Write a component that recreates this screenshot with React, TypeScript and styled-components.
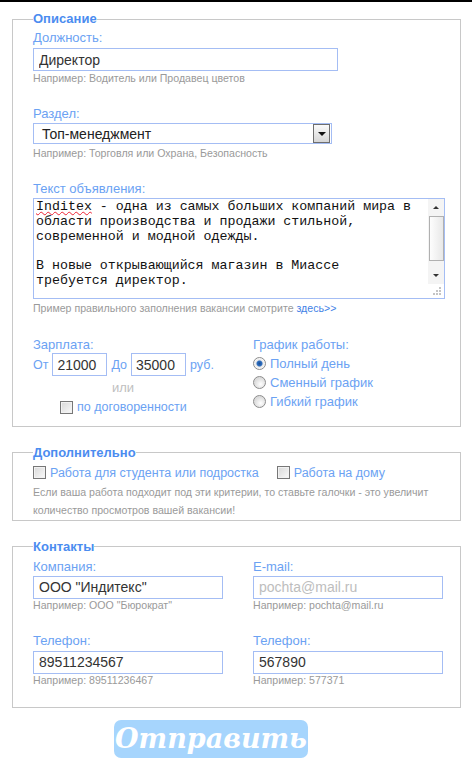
import React from 'react'
import styled, { createGlobalStyle } from 'styled-components'

const GlobalStyle = createGlobalStyle`
  html, body {
    margin: 0;
    padding: 0;
    background: #fff;
  }
  body {
    font-family: "Liberation Sans", Arial, sans-serif;
    border-top: 2px solid #000;
  }
`

const Page = styled.div`
  display: flex;
  flex-direction: column;
  width: 472px;
  padding-bottom: 10px;
`

const Box = styled.fieldset<{ $top: number; $bottom: number }>`
  margin: ${p => p.$top}px 11px 0 12px;
  padding: 0 18px ${p => p.$bottom}px 20px;
  border: 1px solid #c8c8c8;
  min-width: 0;
`

const Legend = styled.legend`
  padding: 0;
  font-size: 13px;
  line-height: 16px;
  font-weight: bold;
  color: #4b8cf0;
`

const Label = styled.div<{ $mt?: number }>`
  margin-top: ${p => p.$mt ?? 0}px;
  font-size: 13px;
  line-height: 16px;
  color: #6ba2f3;
`

const Hint = styled.div<{ $mt?: number }>`
  margin-top: ${p => p.$mt ?? 1}px;
  font-size: 10.6px;
  line-height: 12px;
  color: #9a9a9a;
  white-space: nowrap;
`

const Link = styled.span`
  color: #3f82e6;
`

const TextInput = styled.input<{ $w: number; $mt?: number }>`
  display: block;
  box-sizing: border-box;
  width: ${p => p.$w}px;
  height: 23px;
  margin: ${p => p.$mt ?? 2}px 0 0;
  padding: 0 5px;
  border: 1px solid #a4bdf4;
  outline: none;
  font-family: "Liberation Sans", Arial, sans-serif;
  font-size: 14px;
  color: #333;
  &::placeholder {
    color: #bdbdbd;
  }
`

const SmallInput = styled(TextInput)`
  display: inline-block;
  margin: 0;
  padding: 0 3px 0 4px;
`

const Select = styled.div`
  box-sizing: border-box;
  width: 299px;
  height: 21px;
  margin-top: 1px;
  border: 1px solid #a4bdf4;
  display: flex;
  align-items: center;
  justify-content: space-between;
  padding: 0 1px 0 8px;
  font-size: 14px;
  color: #222;
`

const SelectButton = styled.span`
  box-sizing: border-box;
  width: 17px;
  height: 19px;
  border: 1px solid #6e6e6e;
  background: linear-gradient(#fafafa, #d6d6d6);
  display: flex;
  align-items: center;
  justify-content: center;
  &::after {
    content: '';
    border-left: 4px solid transparent;
    border-right: 4px solid transparent;
    border-top: 4px solid #111;
  }
`

const TextArea = styled.div`
  box-sizing: border-box;
  width: 412px;
  height: 101px;
  margin-top: 1px;
  border: 1px solid #a4bdf4;
  display: flex;
`

const AreaText = styled.div`
  flex: 1;
  padding: 1px 2px;
  font-family: "Liberation Mono", "Courier New", monospace;
  font-size: 13.3px;
  line-height: 14.8px;
  color: #111;
  white-space: pre;
  overflow: hidden;
`

const Spell = styled.span`
  text-decoration: underline wavy #e23;
  text-decoration-thickness: 1px;
  text-underline-offset: 1px;
`

const Scrollbar = styled.div`
  width: 16px;
  display: flex;
  flex-direction: column;
  align-items: center;
  background: #f4f4f4;
  border-left: 1px solid #fff;
`

const Arrow = styled.span<{ $up?: boolean }>`
  height: 17px;
  display: flex;
  align-items: center;
  &::after {
    content: '';
    border-left: 3px solid transparent;
    border-right: 3px solid transparent;
    ${p => p.$up ? 'border-bottom: 3px solid #333;' : 'border-top: 3px solid #333;'}
  }
`

const Thumb = styled.span`
  box-sizing: border-box;
  width: 15px;
  height: 45px;
  border: 1px solid #b0b0b0;
  background: linear-gradient(90deg, #fdfdfd, #e8e8e8);
`

const Track = styled.span`
  flex: 1;
`

const Grip = styled.span`
  height: 14px;
  width: 16px;
  background: #fff;
  display: flex;
  align-items: flex-end;
  justify-content: flex-end;
  padding: 0 3px 3px 0;
  box-sizing: border-box;
`

const Corner = () => (
  <svg width="8" height="8" viewBox="0 0 8 8">
    <rect x="6" y="0" width="2" height="2" fill="#c4c4c4" />
    <rect x="3" y="3" width="2" height="2" fill="#c4c4c4" />
    <rect x="6" y="3" width="2" height="2" fill="#c4c4c4" />
    <rect x="0" y="6" width="2" height="2" fill="#c4c4c4" />
    <rect x="3" y="6" width="2" height="2" fill="#c4c4c4" />
    <rect x="6" y="6" width="2" height="2" fill="#c4c4c4" />
  </svg>
)

const Columns = styled.div<{ $mt: number }>`
  display: grid;
  grid-template-columns: 220px 1fr;
  margin-top: ${p => p.$mt}px;
`

const Col = styled.div``

const InputRow = styled.div`
  display: flex;
  align-items: center;
  gap: 4px;
  height: 23px;
  font-size: 12.5px;
  color: #6ba2f3;
`

const Or = styled.div`
  width: 180px;
  margin-top: 6px;
  text-align: center;
  font-size: 13px;
  line-height: 12px;
  color: #c0c0c0;
`

const CheckRow = styled.label<{ $ml?: number; $mt?: number }>`
  display: inline-flex;
  align-items: center;
  gap: 4px;
  margin-left: ${p => p.$ml ?? 0}px;
  margin-top: ${p => p.$mt ?? 0}px;
  height: 16px;
  font-size: 12.5px;
  color: #6ba2f3;
  white-space: nowrap;
`

const Check = styled.span`
  box-sizing: border-box;
  width: 13px;
  height: 13px;
  border: 1px solid #777;
  background: linear-gradient(135deg, #d8d8d8, #fafafa);
  box-shadow: inset 0 0 0 1px #f2f2f2;
`

const Radio = styled.span<{ $on?: boolean }>`
  box-sizing: border-box;
  width: 13px;
  height: 13px;
  border-radius: 50%;
  border: 1px solid #8c8c8c;
  background: ${p =>
    p.$on
      ? 'radial-gradient(circle, #1c4f96 0, #2f6fc0 2.5px, #e8e8e8 3.5px, #fff 6px)'
      : 'radial-gradient(circle at 60% 65%, #fff 0, #dcdcdc 6px)'};
`

const RadioList = styled.div`
  display: flex;
  flex-direction: column;
  margin-top: 1px;
`

const RadioRow = styled.label`
  display: flex;
  align-items: center;
  gap: 4px;
  height: 19px;
  font-size: 13px;
  color: #6ba2f3;
`

const Extras = styled.div`
  display: flex;
  margin-top: 4px;
`

const Note = styled.div`
  margin-top: 2px;
  font-size: 10.6px;
  line-height: 18.5px;
  color: #9a9a9a;
  white-space: nowrap;
`

const Submit = styled.button`
  align-self: flex-start;
  margin: 12px 0 0 114px;
  width: 194px;
  height: 38px;
  border: none;
  border-radius: 7px;
  background: #a6d5fd;
  color: #fff;
  font-family: "DejaVu Serif", "Liberation Serif", serif;
  font-style: italic;
  font-weight: bold;
  font-size: 27px;
  line-height: 36px;
  padding: 0;
`

export default function App() {
  return (
    <Page>
      <GlobalStyle />
      <Box $top={9} $bottom={8}>
        <Legend>Описание</Legend>
        <Label $mt={3}>Должность:</Label>
        <TextInput $w={305} defaultValue="Директор" />
        <Hint>Например: Водитель или Продавец цветов</Hint>

        <Label $mt={22}>Раздел:</Label>
        <Select>
          <span>Топ-менеджмент</span>
          <SelectButton />
        </Select>
        <Hint $mt={3}>Например: Торговля или Охрана, Безопасность</Hint>

        <Label $mt={22}>Текст объявления:</Label>
        <TextArea>
          <AreaText>
            <Spell>Inditex</Spell>{' - одна из самых больших компаний мира в\nобласти производства и продажи стильной,\nсовременной и модной одежды.\n\nВ новые открывающийся магазин в Миассе\nтребуется директор.'}
          </AreaText>
          <Scrollbar>
            <Arrow $up />
            <Thumb />
            <Track />
            <Arrow />
            <Grip><Corner /></Grip>
          </Scrollbar>
        </TextArea>
        <Hint $mt={3}>
          Пример правильного заполнения вакансии смотрите <Link>здесь&gt;&gt;</Link>
        </Hint>

        <Columns $mt={23}>
          <Col>
            <Label>Зарплата:</Label>
            <InputRow>
              <span>От</span>
              <SmallInput $w={55} defaultValue="21000" />
              <span>До</span>
              <SmallInput $w={55} defaultValue="35000" />
              <span>руб.</span>
            </InputRow>
            <Or>или</Or>
            <CheckRow $ml={27} $mt={5}>
              <Check />
              по договоренности
            </CheckRow>
          </Col>
          <Col>
            <Label>График работы:</Label>
            <RadioList>
              <RadioRow><Radio $on />Полный день</RadioRow>
              <RadioRow><Radio />Сменный график</RadioRow>
              <RadioRow><Radio />Гибкий график</RadioRow>
            </RadioList>
          </Col>
        </Columns>
      </Box>

      <Box $top={18} $bottom={0}>
        <Legend>Дополнительно</Legend>
        <Extras>
          <CheckRow>
            <Check />
            Работа для студента или подростка
          </CheckRow>
          <CheckRow $ml={18}>
            <Check />
            Работа на дому
          </CheckRow>
        </Extras>
        <Note>
          Если ваша работа подходит под эти критерии, то ставьте галочки - это увеличит
          <br />
          количество просмотров вашей вакансии!
        </Note>
      </Box>

      <Box $top={18} $bottom={21}>
        <Legend>Контакты</Legend>
        <Columns $mt={4}>
          <Col>
            <Label>Компания:</Label>
            <TextInput $w={190} $mt={1} defaultValue={'ООО "Индитекс"'} />
            <Hint $mt={0}>Например: ООО "Бюрократ"</Hint>
          </Col>
          <Col>
            <Label>E-mail:</Label>
            <TextInput $w={190} $mt={1} placeholder="pochta@mail.ru" />
            <Hint $mt={0}>Например: pochta@mail.ru</Hint>
          </Col>
        </Columns>
        <Columns $mt={22}>
          <Col>
            <Label>Телефон:</Label>
            <TextInput $w={190} defaultValue="89511234567" />
            <Hint $mt={0}>Например: 89511236467</Hint>
          </Col>
          <Col>
            <Label>Телефон:</Label>
            <TextInput $w={190} defaultValue="567890" />
            <Hint $mt={0}>Например: 577371</Hint>
          </Col>
        </Columns>
      </Box>

      <Submit type="button">Отправить</Submit>
    </Page>
  )
}
